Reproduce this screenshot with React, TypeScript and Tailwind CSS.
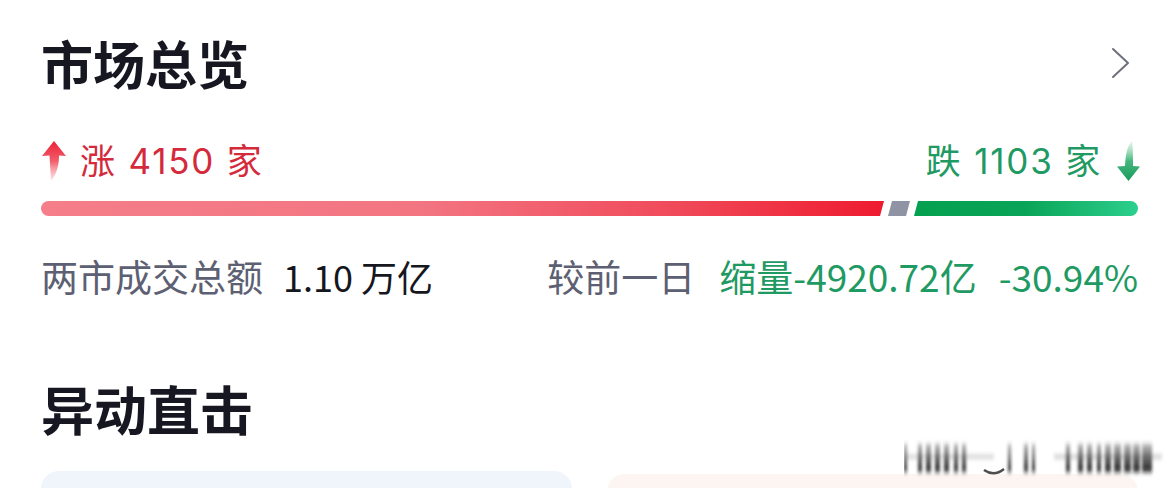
import React from "react";

const font = { fontFamily: '"Noto Sans CJK SC", "Noto Sans", sans-serif' };
const mixed = { fontFamily: 'Inter, "Noto Sans CJK SC", sans-serif' };

function UpArrow() {
  return (
    <svg width="26" height="42" viewBox="0 0 26 42" className="shrink-0">
      <defs>
        <linearGradient id="ug" x1="0" y1="0" x2="0" y2="1">
          <stop offset="0" stopColor="#ec2336" />
          <stop offset="0.5" stopColor="#f25c6a" />
          <stop offset="1" stopColor="#fbd2d6" stopOpacity="0.6" />
        </linearGradient>
      </defs>
      <path d="M13 1 L25 16 L18 15.5 C18 26 15.5 34 10 41 C9.5 33 9 23 8.5 15.5 L1 16 Z" fill="url(#ug)" />
    </svg>
  );
}

function DownArrow() {
  return (
    <svg width="28" height="42" viewBox="0 0 28 42" className="shrink-0">
      <defs>
        <linearGradient id="dg" x1="0" y1="0" x2="0" y2="1">
          <stop offset="0" stopColor="#c7ecd9" stopOpacity="0.5" />
          <stop offset="0.5" stopColor="#45b77d" />
          <stop offset="1" stopColor="#1a9a5c" />
        </linearGradient>
      </defs>
      <path d="M18 1 C12.5 7 11.5 16 11 26 L3 26.5 L14.5 41 L26 26.5 L19 26 C19 16 19 8 18 1 Z" fill="url(#dg)" />
    </svg>
  );
}

function Chevron() {
  return (
    <svg width="20" height="32" viewBox="0 0 20 32" className="shrink-0">
      <polyline points="2,2 17,16 2,30" fill="none" stroke="#6e717d" strokeWidth="2" strokeLinecap="round" strokeLinejoin="round" />
    </svg>
  );
}

function Watermark() {
  const bars = [
    [0, 3], [14, 4], [22, 5], [31, 5], [40, 5], [50, 4], [58, 4],
    [104, 3], [120, 4], [128, 3],
    [162, 4], [174, 5], [183, 5], [193, 4], [201, 6], [210, 7], [220, 7], [229, 7], [238, 10],
  ];
  return (
    <svg width="262" height="46" viewBox="0 0 262 46" className="absolute left-[904px] top-[436px]">
      <defs>
        <filter id="blur" x="-20%" y="-30%" width="140%" height="160%">
          <feGaussianBlur stdDeviation="1.6 2.4" />
        </filter>
        <linearGradient id="wg" x1="0" y1="0" x2="0" y2="1">
          <stop offset="0" stopColor="#333" stopOpacity="0.35" />
          <stop offset="1" stopColor="#111" stopOpacity="0.95" />
        </linearGradient>
      </defs>
      <g filter="url(#blur)" fill="url(#wg)">
        {bars.map(([x, w], i) => (
          <rect key={i} x={x} y={8} width={w} height={28} />
        ))}
        <rect x="0" y="19" width="90" height="3" opacity="0.35" />
        <rect x="150" y="19" width="108" height="3" opacity="0.4" />
      </g>
      <path d="M80 34 Q90 41 100 33" stroke="#222" strokeWidth="2.5" fill="none" opacity="0.8" />
    </svg>
  );
}

export default function App() {
  return (
    <div className="relative w-[1173px] h-[488px] overflow-hidden bg-white" style={font}>
      <div className="pl-[41px] pr-[35px] flex flex-col">
        {/* header */}
        <div className="h-[126px] flex items-center justify-between">
          <div className="text-[52px] leading-none font-bold text-[#171722]">市场总览</div>
          <div className="mr-[7px]">
            <Chevron />
          </div>
        </div>

        {/* up / down counts */}
        <div className="h-[70px] flex items-center justify-between">
          <div className="flex items-center">
            <UpArrow />
            <span className="ml-[13px] text-[35px] leading-none tracking-[1.8px] text-[#d42a3c]" style={mixed}>涨 4150 家</span>
          </div>
          <div className="flex items-center mr-[-4px]">
            <span className="text-[35px] leading-none tracking-[1.8px] text-[#1f9a63]" style={mixed}>跌 1103 家</span>
            <span className="ml-[12px]">
              <DownArrow />
            </span>
          </div>
        </div>

        {/* bar */}
        <div className="mt-[5px] h-[15px] flex">
          <div className="w-[843px] h-full rounded-l-full bg-[linear-gradient(to_right,#f47e89_0%,#f37582_45%,#f04a5a_75%,#ee1b2f_100%)] [clip-path:polygon(0_0,100%_0,calc(100%-4px)_100%,0_100%)]" />
          <div className="ml-[4px] w-[22px] h-full bg-[#8f93a3] [clip-path:polygon(4px_0,100%_0,calc(100%-4px)_100%,0_100%)]" />
          <div className="ml-[4px] flex-1 h-full rounded-r-full bg-[linear-gradient(to_right,#04a04f_0%,#0aa458_50%,#2ccf8d_100%)] [clip-path:polygon(4px_0,100%_0,100%_100%,0_100%)]" />
        </div>

        {/* volume row */}
        <div className="h-[120px] flex items-center justify-between">
          <div className="flex items-center">
            <span className="text-[37px] leading-none text-[#5c6072]">两市成交总额</span>
            <span className="ml-[20px] text-[36px] leading-none text-[#16161e]">1.10 万亿</span>
          </div>
          <div className="flex items-center">
            <span className="text-[37px] leading-none text-[#5c6072]">较前一日</span>
            <span className="ml-[24px] text-[37px] leading-none text-[#1f9a63]">缩量-4920.72亿</span>
            <span className="ml-[22px] text-[37px] leading-none text-[#1f9a63]">-30.94%</span>
          </div>
        </div>

        {/* section 2 */}
        <div className="mt-[46px] h-[52px] flex items-center">
          <div className="text-[53px] leading-none font-bold text-[#171722]">异动直击</div>
        </div>

        <div className="mt-[37px] flex gap-[35px]">
          <div className="flex-1 h-[60px] rounded-[18px] bg-[#f0f4fb]" />
          <div className="flex-1 h-[60px] rounded-[18px] bg-[#fdf5f2] mt-[3px]" />
        </div>
      </div>
      <Watermark />
    </div>
  );
}
